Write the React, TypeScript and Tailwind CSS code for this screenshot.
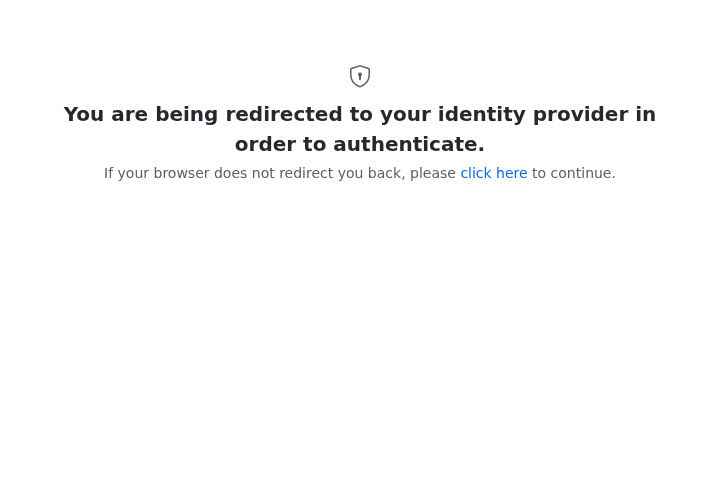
export default function App() {
  return (
    <main className="flex min-h-[480px] flex-col items-center px-12 pt-16 text-center font-['DejaVu_Sans',sans-serif] text-sm leading-[21px] text-[#57606a] will-change-transform">
      <svg width="24" height="24" viewBox="0 0 24 24" fill="currentColor" aria-hidden="true">
        <path
          fillRule="evenodd"
          d="M12.077 2.563a.25.25 0 00-.154 0L3.673 5.24a.249.249 0 00-.173.237V10.5c0 5.461 3.28 9.483 8.43 11.426a.2.2 0 00.14 0c5.15-1.943 8.43-5.965 8.43-11.426V5.476a.25.25 0 00-.173-.237l-8.25-2.676zm-.617-1.426a1.75 1.75 0 011.08 0l8.25 2.675A1.75 1.75 0 0122 5.476V10.5c0 6.19-3.77 10.705-9.401 12.83a1.699 1.699 0 01-1.198 0C5.771 21.204 2 16.69 2 10.5V5.476c0-.76.49-1.43 1.21-1.664l8.25-2.675zM13 12.232A2 2 0 0012 8.5a2 2 0 00-1 3.732V15a1 1 0 102 0v-2.768z"
        />
      </svg>
      <h3 className="mt-[11px] text-xl leading-[30px] font-bold text-[#24292f]">
        You are being redirected to your identity provider in order to authenticate.
      </h3>
      <p className="mt-1">
        If your browser does not redirect you back, please{" "}
        <a href="#" className="text-[#0969da]">click here</a> to continue.
      </p>
    </main>
  );
}
